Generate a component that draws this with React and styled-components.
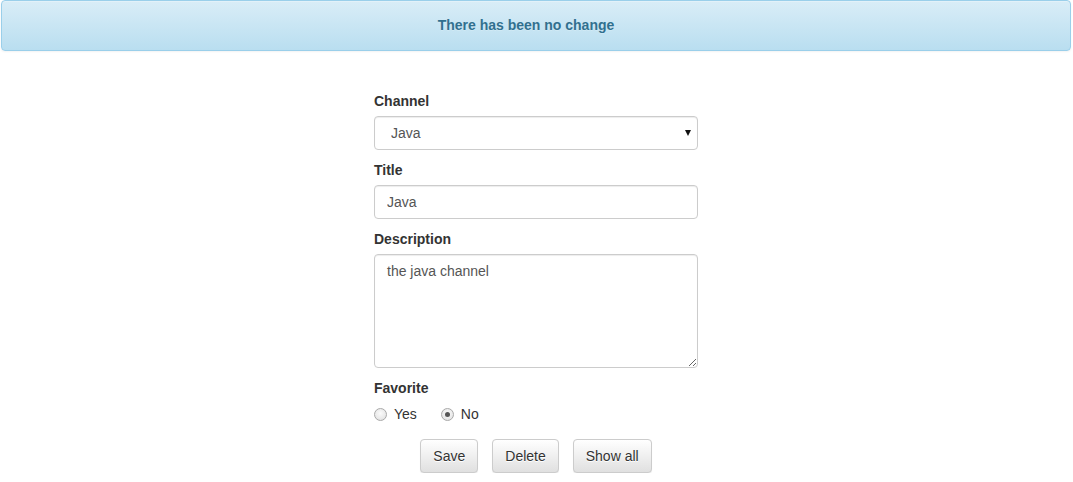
import { useState } from "react";
import styled, { createGlobalStyle } from "styled-components";

const GlobalStyle = createGlobalStyle`
  * { box-sizing: border-box; }
  body {
    margin: 0;
    background: #fff;
    font-family: "Liberation Sans", Arial, Helvetica, sans-serif;
    font-size: 14px;
    line-height: 1.42857;
    color: #333;
  }
`;

const Page = styled.div`
  padding: 0 2px 0 1px;
`;

const Alert = styled.div`
  height: 51px;
  padding: 1px 35px 0 15px;
  display: flex;
  align-items: center;
  justify-content: center;
  background-image: linear-gradient(to bottom, #d9edf7 0, #b9def0 100%);
  border: 1px solid #9acfea;
  border-radius: 4px;
  box-shadow: inset 0 1px 0 rgba(255, 255, 255, 0.25), 0 1px 2px rgba(0, 0, 0, 0.05);
  color: #31708f;
  font-weight: bold;
  text-shadow: 0 1px 0 rgba(255, 255, 255, 0.2);
`;

const Form = styled.form`
  width: 324px;
  margin: 40px auto 0;
  display: flex;
  flex-direction: column;
  gap: 10px;
`;

const Group = styled.div`
  display: flex;
  flex-direction: column;
  gap: 5px;
`;

const Label = styled.label`
  font-weight: bold;
  line-height: 20px;
`;

const fieldStyles = `
  width: 100%;
  border: 1px solid #ccc;
  border-radius: 4px;
  background: #fff;
  color: #555;
  font-family: "Liberation Sans", Arial, Helvetica, sans-serif;
  font-size: 14px;
  box-shadow: inset 0 1px 1px rgba(0, 0, 0, 0.075);
  outline: none;
`;

const SelectWrap = styled.div`
  position: relative;
`;

const Select = styled.select`
  ${fieldStyles}
  height: 34px;
  padding: 6px 12px 6px 16px;
  appearance: none;
  -webkit-appearance: none;
`;

const Caret = styled.span`
  position: absolute;
  right: 7px;
  top: 14px;
  width: 0;
  height: 0;
  border-left: 3.5px solid transparent;
  border-right: 3.5px solid transparent;
  border-top: 6px solid #111;
  pointer-events: none;
`;

const Input = styled.input`
  ${fieldStyles}
  height: 34px;
  padding: 6px 12px;
`;

const TextArea = styled.textarea`
  ${fieldStyles}
  height: 114px;
  padding: 6px 12px;
  line-height: 20px;
  resize: vertical;
`;

const Radios = styled.div`
  display: flex;
  align-items: center;
  gap: 24px;
  height: 20px;
  margin-top: 2px;
`;

const RadioLabel = styled.label`
  display: flex;
  align-items: center;
  gap: 7px;
  color: #333;
`;

const Radio = styled.input`
  appearance: none;
  -webkit-appearance: none;
  margin: 0;
  width: 13px;
  height: 13px;
  border-radius: 50%;
  border: 1px solid #a9a9a9;
  background: radial-gradient(circle at 50% 40%, #fbfbfb 0, #dedede 100%);
  position: relative;
  &:checked::after {
    content: "";
    position: absolute;
    left: 3px;
    top: 3px;
    width: 5px;
    height: 5px;
    border-radius: 50%;
    background: #555;
  }
`;

const Buttons = styled.div`
  display: flex;
  justify-content: center;
  gap: 14px;
  margin-top: 4px;
`;

const Button = styled.button`
  height: 34px;
  padding: 6px 12px;
  font-family: "Liberation Sans", Arial, Helvetica, sans-serif;
  font-size: 14px;
  color: #333;
  border: 1px solid #ccc;
  border-radius: 4px;
  background-image: linear-gradient(to bottom, #fff 0, #e0e0e0 100%);
  text-shadow: 0 1px 0 #fff;
  box-shadow: inset 0 1px 0 rgba(255, 255, 255, 0.15), 0 1px 1px rgba(0, 0, 0, 0.075);
  cursor: pointer;
`;

const App = () => {
  const [favorite, setFavorite] = useState("no");

  return (
    <Page>
      <GlobalStyle />
      <Alert>There has been no change</Alert>
      <Form onSubmit={(e) => e.preventDefault()}>
        <Group>
          <Label>Channel</Label>
          <SelectWrap>
            <Select defaultValue="java">
              <option value="java">Java</option>
            </Select>
            <Caret />
          </SelectWrap>
        </Group>
        <Group>
          <Label>Title</Label>
          <Input defaultValue="Java" />
        </Group>
        <Group>
          <Label>Description</Label>
          <TextArea defaultValue="the java channel" />
        </Group>
        <Group>
          <Label>Favorite</Label>
          <Radios>
            <RadioLabel>
              <Radio type="radio" name="fav" checked={favorite === "yes"} onChange={() => setFavorite("yes")} />
              Yes
            </RadioLabel>
            <RadioLabel>
              <Radio type="radio" name="fav" checked={favorite === "no"} onChange={() => setFavorite("no")} />
              No
            </RadioLabel>
          </Radios>
        </Group>
        <Buttons>
          <Button type="button">Save</Button>
          <Button type="button">Delete</Button>
          <Button type="button">Show all</Button>
        </Buttons>
      </Form>
    </Page>
  );
};

export default App;
